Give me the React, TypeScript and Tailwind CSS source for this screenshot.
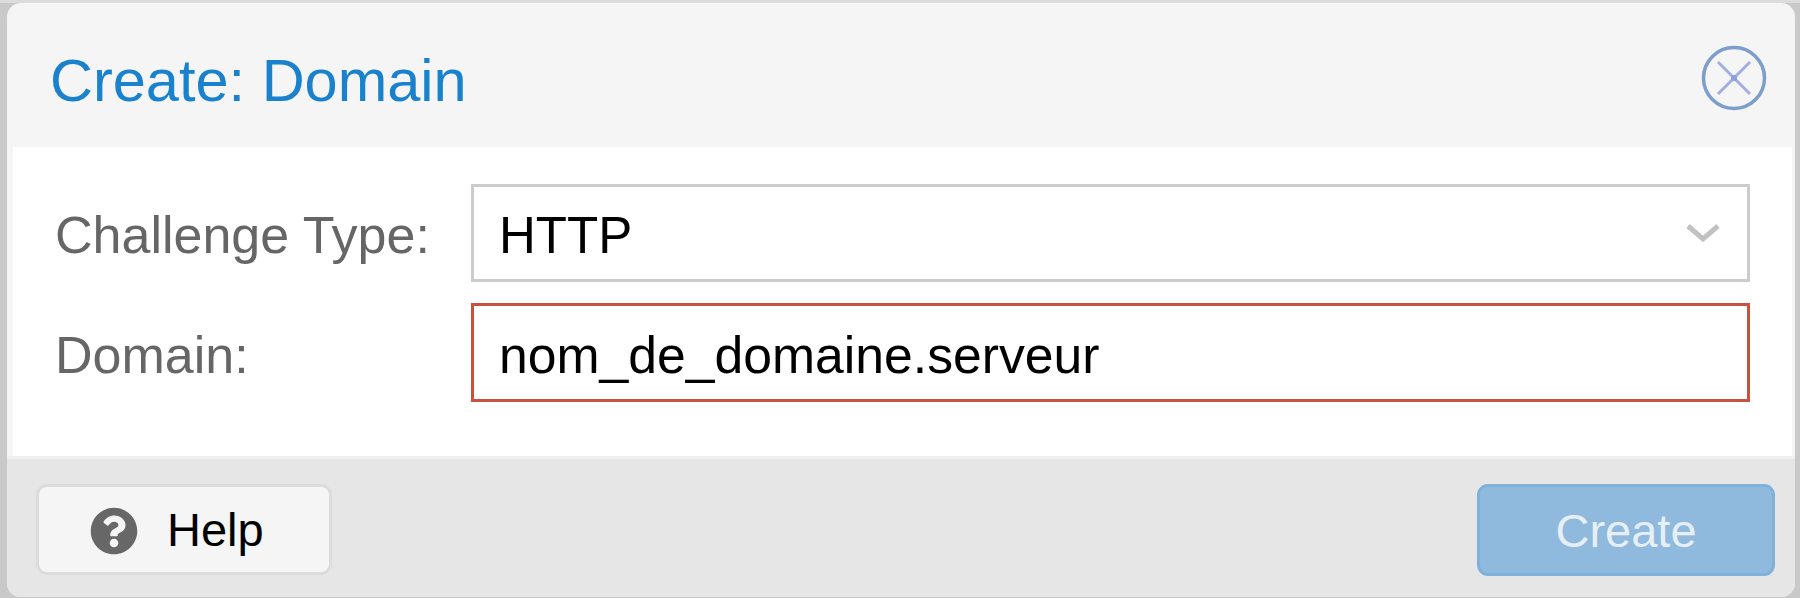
import { FaQuestionCircle } from 'react-icons/fa';

const sans = 'font-["Liberation_Sans",Arial,sans-serif]';

export default function App() {
  return (
    <div className={`${sans} w-[1800px] h-[598px] overflow-hidden bg-[#c9c9c9] border-t-[3px] border-[#dcdcdc] pl-[7px] pr-[5px] pb-[1px] flex`}>
      <div className="flex-1 flex flex-col rounded-[14px] overflow-hidden bg-[#f5f5f5]">
        {/* title bar */}
        <div className="h-[144px] shrink-0 pl-[43px] pr-[28px] flex items-center justify-between">
          <h1 className="text-[59.5px] leading-none text-[#1a82cc] font-normal pt-[12px]">Create: Domain</h1>
          <svg width="66" height="66" viewBox="0 0 66 66" fill="none" className="mt-[6px] blur-[0.6px]">
            <circle cx="33" cy="33" r="30.5" stroke="#7d9dca" strokeWidth="3.5" />
            <path d="M17 17 L49 49 M49 17 L17 49" stroke="#a3afe0" strokeWidth="3" />
            <circle cx="33" cy="33" r="3" stroke="none" fill="#8d9fdc" />
          </svg>
        </div>

        {/* form */}
        <div className="h-[309px] shrink-0 ml-[6px] mr-[3px] bg-white pt-[37px] pl-[42px] pr-[42px] flex flex-col gap-[21px]">
          <div className="flex items-baseline">
            <label className="w-[416px] shrink-0 text-[52px] leading-none text-[#666666]">Challenge Type:</label>
            <div className="flex-1 h-[98px] border-[3px] border-[#cccccc] pl-[25px] pr-[26px] pt-[7px] flex items-center justify-between text-[51px] text-black">
              <span>HTTP</span>
              <svg width="36" height="22" viewBox="0 0 36 22" fill="none" className="-mt-[7px] blur-[0.6px]">
                <path d="M3 4 L18 17 L33 4" stroke="#c2c2c2" strokeWidth="5" />
              </svg>
            </div>
          </div>
          <div className="flex items-baseline">
            <label className="w-[416px] shrink-0 text-[52px] leading-none text-[#666666]">Domain:</label>
            <div className="flex-1 h-[99px] border-[3px] border-[#c9523e] pl-[25px] pt-[7px] flex items-center text-[51.7px] text-black">
              nom_de_domaine.serveur
            </div>
          </div>
        </div>

        {/* toolbar */}
        <div className="flex-1 bg-[#e6e6e6] border-t-[3px] border-[#f0f0f0] pl-[29px] pr-[20px] pt-[25px] flex items-start justify-between">
          <button type="button" className="w-[296px] h-[91px] rounded-[11px] border-[3px] border-[#dcdcdc] bg-[#f5f5f5] flex items-center pl-[51px] gap-[29px] pt-[2px] text-[47px] text-black">
            <FaQuestionCircle size={48} color="#676767" />
            <span>Help</span>
          </button>
          <button type="button" disabled className="w-[298px] h-[92px] rounded-[11px] border-[3px] border-[#7fb1da] bg-[#8fbadd] pt-[3px] flex items-center justify-center text-[47px] text-[#e6eff6]">
            Create
          </button>
        </div>
      </div>
    </div>
  );
}
